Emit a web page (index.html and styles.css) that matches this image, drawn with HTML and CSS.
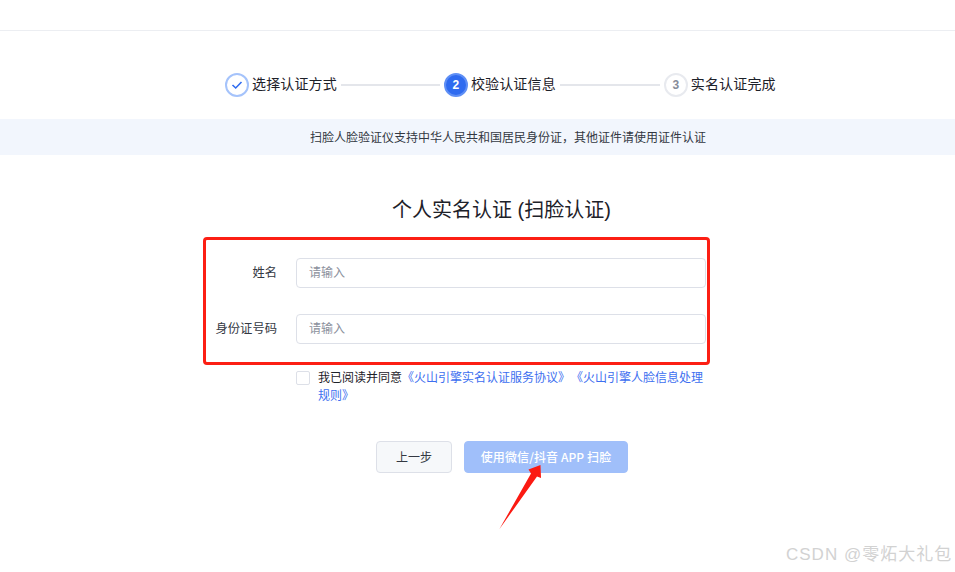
FILE: index.html
```html
<!DOCTYPE html>
<html lang="zh-CN">
<head>
<meta charset="utf-8">
<title>个人实名认证</title>
<link rel="stylesheet" href="styles.css">
</head>
<body>
<header class="topbar"></header>
<ol class="steps">
  <li class="step">
    <span class="dot dot-done"><svg width="12" height="10" viewBox="0 0 12 10"><path d="M1.5 5 L4.7 8 L10.5 2" fill="none" stroke="#2f6bf0" stroke-width="1.6"/></svg></span>
    <span class="step-label">选择认证方式</span>
  </li>
  <li class="rule"></li>
  <li class="step">
    <span class="dot dot-active">2</span>
    <span class="step-label">校验认证信息</span>
  </li>
  <li class="rule rule-wide"></li>
  <li class="step">
    <span class="dot dot-todo">3</span>
    <span class="step-label">实名认证完成</span>
  </li>
</ol>
<div class="notice"><span>扫脸人脸验证仪支持中华人民共和国居民身份证，其他证件请使用证件认证</span></div>
<h1 class="title">个人实名认证 (扫脸认证)</h1>
<form class="form">
  <div class="field">
    <label class="field-label">姓名</label>
    <input class="field-input" placeholder="请输入">
  </div>
  <div class="field">
    <label class="field-label">身份证号码</label>
    <input class="field-input" placeholder="请输入">
  </div>
  <div class="agree">
    <span class="checkbox"></span>
    <p class="agree-text">我已阅读并同意<a class="link">《火山引擎实名认证服务协议》</a><a class="link link-next">《火山引擎人脸信息处理规则》</a></p>
  </div>
  <div class="actions">
    <button type="button" class="btn btn-back">上一步</button>
    <button type="button" class="btn btn-primary">使用微信/抖音 APP 扫脸</button>
  </div>
</form>
<div class="red-box"></div>
<svg class="arrow" width="60" height="80" viewBox="0 0 60 80"><polygon points="9.3,75.3 41,19.5 38.5,15.5 50.5,11 51,24 47,22.5" fill="#fb1a12"/></svg>
<div class="watermark">CSDN @零炻大礼包</div>
</body>
</html>
```

FILE: styles.css
```css
* { box-sizing: border-box; }
html, body { margin: 0; padding: 0; }
body {
  width: 955px;
  height: 572px;
  overflow: hidden;
  background: #fff;
  color: #1d2129;
  font-family: "Liberation Sans", "Noto Sans CJK SC", sans-serif;
  position: relative;
}
.topbar { height: 31px; border-bottom: 1px solid #eceef2; }
.steps {
  list-style: none;
  margin: 0;
  padding: 42px 0 0 225px;
  height: 88px;
  display: flex;
  align-items: flex-start;
}
.step { display: flex; align-items: center; height: 24px; gap: 3px; }
.step-label { font-size: 14px; line-height: 22px; padding-bottom: 2px; letter-spacing: 0.15px; white-space: nowrap; }
.rule { width: 99px; height: 2px; margin: 11px 4px 0; background: #e4e6eb; }
.rule-wide { width: 100px; }
.dot {
  width: 24px;
  height: 24px;
  border-radius: 50%;
  display: flex;
  align-items: center;
  justify-content: center;
  font-size: 12px;
  font-weight: 700;
}
.dot-done { background: #fff; border: 2px solid #a5c3fb; }
.dot-active { background: #2f6bf0; border: 2px solid #5f8ff5; color: #fff; }
.dot-todo { background: #fff; border: 2px solid #e8eaef; color: #868c99; }
.notice {
  height: 36px;
  background: #f2f6fd;
  display: flex;
  align-items: center;
  justify-content: center;
  padding: 0 0 2px 61px;
  font-size: 12px;
  color: #333842;
}
.title {
  margin: 42px 0 0;
  padding-left: 48px;
  text-align: center;
  font-size: 20px;
  font-weight: 400;
  line-height: 26px;
}
.form { margin: 35px 0 0 204px; width: 502px; }
.field { display: flex; align-items: center; height: 30px; margin-bottom: 26px; }
.field-label {
  width: 73px;
  margin-right: 19px;
  padding-bottom: 2px;
  text-align: right;
  font-size: 12.3px;
  color: #333842;
  white-space: nowrap;
}
.field-input {
  width: 410px;
  height: 30px;
  padding: 0 12px;
  border: 1px solid #dde0e8;
  border-radius: 4px;
  background: #fff;
  font: inherit;
  font-size: 12px;
  outline: none;
}
.field-input::placeholder { color: #8b909c; }
.agree { display: flex; margin: -1px 0 0 92px; width: 410px; }
.checkbox {
  flex: none;
  width: 14px;
  height: 14px;
  margin: 2px 8px 0 0;
  border: 1px solid #dde0e8;
  border-radius: 2px;
}
.agree-text { margin: 0; font-size: 12px; line-height: 18px; width: 388px; color: #1d2129; }
.link { color: #3d6ff0; }
.link-next { margin-left: 7px; }
.actions {
  display: flex;
  gap: 12px;
  margin: 36px 0 0 172px;
}
.btn {
  height: 32px;
  border-radius: 4px;
  font-family: inherit;
  font-size: 12px;
  padding: 0 0 2px;
}
.btn-back { width: 76px; background: #f6f8fa; border: 1px solid #dde0e8; color: #333842; }
.btn-primary {
  width: 164px;
  background: #a0bffa;
  border: 1px solid #a0bffa;
  color: #fff;
  font-family: "Noto Sans CJK SC", sans-serif;
  font-weight: 500;
  letter-spacing: 0.1px;
}
.red-box {
  position: absolute;
  left: 203px;
  top: 237px;
  width: 507px;
  height: 128px;
  border: 3px solid #fc1f14;
  border-radius: 4px;
}
.arrow { position: absolute; left: 490px; top: 454px; }
.watermark {
  position: absolute;
  left: 786px;
  top: 544px;
  font-size: 17px;
  line-height: 22px;
  letter-spacing: 1px;
  color: #d2d2d2;
  white-space: nowrap;
}
```
